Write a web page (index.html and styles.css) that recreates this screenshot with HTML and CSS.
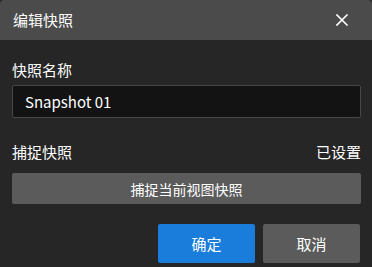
FILE: index.html
```html
<!DOCTYPE html>
<html lang="zh-CN">

<head>
    <meta charset="UTF-8">
    <meta name="viewport" content="width=device-width, initial-scale=1.0">
    <title>编辑快照</title>

    <link rel="stylesheet" href="styles.css">
</head>

<body>
    <div class="dialog">
        <header class="head">
            <h1>编辑快照</h1>
            <button class="close" aria-label="关闭">
                <svg width="12" height="12" viewBox="0 0 12 12">
                    <path d="M1 1 L11 11 M11 1 L1 11" stroke="#fff" stroke-width="1.6" stroke-linecap="square" />
                </svg>
            </button>
        </header>

        <section class="content">
            <label class="label" for="name">快照名称</label>
            <input class="inpt" id="name" type="text" value="Snapshot 01">

            <div class="row">
                <span>捕捉快照</span>
                <span>已设置</span>
            </div>
            <button class="btn capture">捕捉当前视图快照</button>

            <div class="actions">
                <button class="btn blue">确定</button>
                <button class="btn">取消</button>
            </div>
        </section>
    </div>
</body>

</html>
```

FILE: styles.css
```css
* {
    padding: 0;
    margin: 0;
    box-sizing: border-box;
}

body {
    background: #262626;
    font-family: "Noto Sans CJK SC", "Noto Sans", sans-serif;
    color: #fff;
}

.dialog {
    width: 372px;
    height: 267px;
    background: #262626;
    border-radius: 4px 4px 0 0;
    overflow: hidden;
}

.head {
    height: 40px;
    background-color: #4b4b4b;
    display: flex;
    align-items: center;
    justify-content: space-between;
    padding-left: 13px;
    padding-right: 24px;
}

.head h1 {
    font-size: 15px;
    font-weight: normal;
    line-height: 20px;
}

.close {
    background: none;
    border: none;
    width: 12px;
    height: 12px;
    display: flex;
}

.content {
    padding: 0 11px 0 12px;
    display: flex;
    flex-direction: column;
}

.label,
.row {
    font-size: 15px;
    line-height: 20px;
}

.label {
    margin-top: 20px;
}

.inpt {
    margin-top: 5px;
    height: 33px;
    background: #131313;
    border: 1px solid #474747;
    border-radius: 2px;
    color: #fff;
    font-family: inherit;
    font-size: 15px;
    padding-left: 12px;
    outline: none;
}

.row {
    display: flex;
    justify-content: space-between;
    margin-top: 24px;
}

.btn {
    height: 31px;
    border: none;
    border-radius: 2px;
    background-color: #5b5b5b;
    color: #fff;
    font-family: inherit;
    font-size: 14px;
}

.capture {
    margin-top: 11px;
}

.actions {
    display: flex;
    justify-content: flex-end;
    gap: 8px;
    margin-top: 20px;
    padding-right: 1px;
}

.actions .btn {
    width: 97px;
    height: 39px;
    font-size: 15px;
}

.blue {
    background-color: #1a7ddb;
}
```
